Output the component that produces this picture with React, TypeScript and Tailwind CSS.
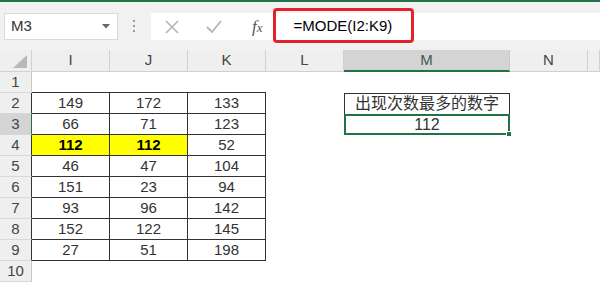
const COLUMNS = ["I", "J", "K", "L", "M", "N", ""];

const VALUES = [
  [149, 172, 133],
  [66, 71, 123],
  [112, 112, 52],
  [46, 47, 104],
  [151, 23, 94],
  [93, 96, 142],
  [152, 122, 145],
  [27, 51, 198],
];

const FONT = "font-['Liberation_Sans','Noto_Sans_CJK_SC',sans-serif]";

function FormulaBar() {
  return (
    <div className="relative flex h-[48px] items-start bg-[#f1f1f1] pt-[11px]">
      <div className="ml-[4px] flex h-[27px] w-[114px] items-center justify-between border border-[#dadada] bg-white pl-[6px] pr-[7px]">
        <span className="text-[15px] text-[#333]">M3</span>
        <svg width="8" height="5" viewBox="0 0 8 5">
          <polygon points="0,0 8,0 4,4.5" fill="#666" />
        </svg>
      </div>
      <div className="ml-[15px] mt-[7px] flex flex-col gap-[3px]">
        <span className="h-[2px] w-[2px] bg-[#9a9a9a]" />
        <span className="h-[2px] w-[2px] bg-[#9a9a9a]" />
        <span className="h-[2px] w-[2px] bg-[#9a9a9a]" />
      </div>
      <div className="ml-[16px] flex h-[27px] flex-1 items-center bg-white">
        <svg className="ml-[14px]" width="14" height="14" viewBox="0 0 14 14">
          <path d="M1 1 L13 13 M13 1 L1 13" stroke="#b5b5b5" strokeWidth="1.6" fill="none" />
        </svg>
        <svg className="ml-[27px]" width="16" height="13" viewBox="0 0 16 13">
          <path d="M1 7 L6 12 L15 1" stroke="#b5b5b5" strokeWidth="1.8" fill="none" />
        </svg>
        <span className="ml-[30px] font-['Liberation_Serif',serif] text-[17px] italic text-[#555]">
          f<span className="text-[13px]">x</span>
        </span>
        <span className="ml-[31px] text-[15px] text-black">=MODE(I2:K9)</span>
      </div>
      <div className="absolute left-[273px] top-[6px] h-[35px] w-[141px] rounded-[4px] border-[3px] border-[#e3232a]" />
    </div>
  );
}

function HeaderRow() {
  return (
    <>
      <div className="flex items-end justify-end border-b border-r border-[#d0d0d0] bg-[#efefef] pb-[3px] pr-[4px]">
        <svg width="14" height="13" viewBox="0 0 14 13">
          <polygon points="14,0 14,13 0,13" fill="#b9b9b9" />
        </svg>
      </div>
      {COLUMNS.map((col) => (
        <div
          key={col || "rest"}
          className={
            col === "M"
              ? "flex items-center justify-center border-b-2 border-r border-b-[#217346] border-r-[#c8c8c8] bg-[#d4d4d4] text-[15px] text-[#3d5a48]"
              : "flex items-center justify-center border-b border-r border-[#d0d0d0] bg-[#efefef] text-[15px] text-[#444]"
          }
        >
          {col}
        </div>
      ))}
    </>
  );
}

function RowHeader({ row }: { row: number }) {
  const inTable = row >= 2 && row <= 9;
  let cls = "flex items-center justify-center border-b border-b-[#d8d8d8] text-[15px] text-[#444] ";
  if (row === 3) cls += "border-r border-r-[#217346] bg-[#d4d4d4]";
  else if (inTable) cls += "border-r border-r-[#333] bg-[#efefef]";
  else cls += "border-r border-r-[#c8c8c8] bg-[#efefef]";
  return <div className={cls}>{row}</div>;
}

function Cell({ row, col }: { row: number; col: number }) {
  const base = "flex items-center justify-center text-[15px] text-[#333]";

  if (col < 3) {
    if (row === 1) return <div className="border-b border-[#333]" />;
    if (row >= 2 && row <= 9) {
      const value = VALUES[row - 2][col];
      const highlighted = row === 4 && col < 2;
      return (
        <div
          className={`${base} border-b border-r border-[#333] ${
            highlighted ? "bg-[#ffff00] font-bold text-black" : ""
          }`}
        >
          {value}
        </div>
      );
    }
  }

  if (col === 4 && row === 2) {
    return (
      <div className={`${base} border-x border-t border-[#333] text-[16px] leading-none`}>
        出现次数最多的数字
      </div>
    );
  }

  if (col === 4 && row === 3) {
    return (
      <div className={`${base} relative border-2 border-[#217346] text-[16px]`}>
        112
        <span className="absolute -bottom-[4px] -right-[4px] h-[6px] w-[6px] border border-white bg-[#217346]" />
      </div>
    );
  }

  return <div />;
}

export default function App() {
  const rows = Array.from({ length: 10 }, (_, i) => i + 1);

  return (
    <div className={`h-[283px] w-[600px] overflow-hidden bg-white ${FONT}`}>
      <div className="h-[2px] bg-[#217346]" />
      <FormulaBar />
      <div className="grid grid-cols-[32px_78px_78px_78px_78px_166px_78px_1fr] grid-rows-[22px_repeat(10,21px)]">
        <HeaderRow />
        {rows.map((row) => (
          <div key={row} className="contents">
            <RowHeader row={row} />
            {COLUMNS.map((_, col) => (
              <Cell key={col} row={row} col={col} />
            ))}
          </div>
        ))}
      </div>
    </div>
  );
}
